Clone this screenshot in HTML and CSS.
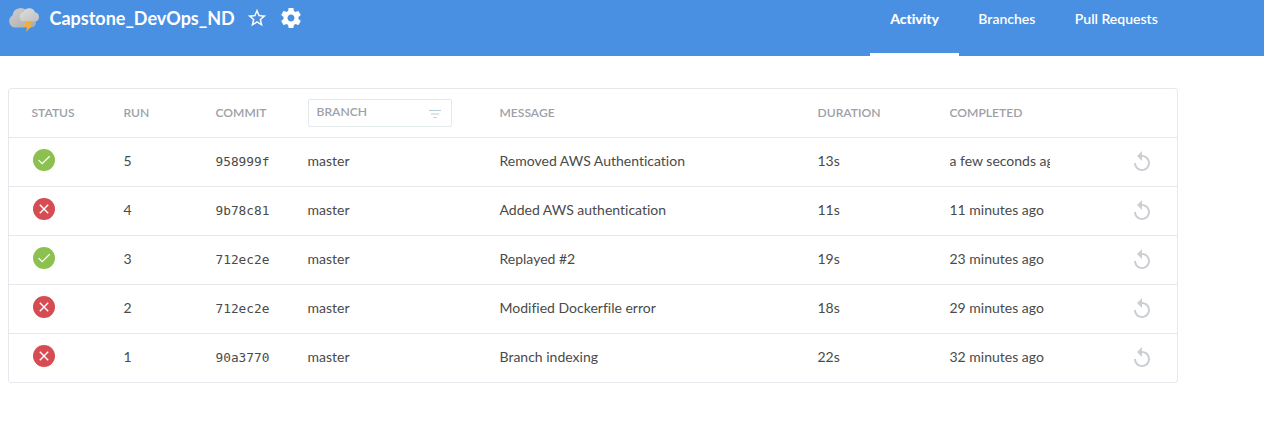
FILE: index.html
```
<!DOCTYPE html>
<html lang="en">
<head>
<meta charset="utf-8">
<title>Capstone_DevOps_ND</title>
<link rel="stylesheet" href="styles.css">
</head>
<body>
<svg class="defs" width="0" height="0">
  <symbol id="ok" viewBox="0 0 22 22"><circle cx="11" cy="11" r="11" fill="#8cc04f"/><path d="M5.6 11.1L9.2 14.7L16.7 7.2" fill="none" stroke="#fff" stroke-width="1.3"/></symbol>
  <symbol id="fail" viewBox="0 0 22 22"><circle cx="11" cy="11" r="11" fill="#d54c53"/><path d="M6.8 6.8L15.2 15.2M15.2 6.8L6.8 15.2" fill="none" stroke="#fff" stroke-width="1.4"/></symbol>
  <symbol id="replay" viewBox="0 0 24 24"><path fill="#cbced3" d="M12 5V1L7 6l5 5V7c3.310 0 6 2.690 6 6s-2.690 6-6 6-6-2.690-6-6H4c0 4.420 3.580 8 8 8s8-3.580 8-8-3.580-8-8-8z"/></symbol>
</svg>
<header class="header">
  <div class="title">
    <svg class="weather" width="32" height="26" viewBox="0 0 32 26">
      <defs>
        <linearGradient id="cloud-back" x1="0" y1="0" x2="1" y2="1"><stop offset="0" stop-color="#d0d0d0"/><stop offset="1" stop-color="#a9a9a9"/></linearGradient>
        <linearGradient id="cloud-front" x1="0" y1="0" x2="1" y2="1"><stop offset="0" stop-color="#dedede"/><stop offset="1" stop-color="#c0c0c0"/></linearGradient>
      </defs>
      <path fill="url(#cloud-back)" d="M6.500 20.500A6.500 6.500 0 0 1 4.500 8.500A8.200 8.200 0 0 1 19 4L27 12Q30 19.500 23 20.500Z"/>
      <path fill="url(#cloud-front)" d="M20.500 14.500H15.500A4.900 4.900 0 0 1 15.500 4.900A6.200 6.200 0 0 1 27 5.300A4.700 4.700 0 0 1 27.500 14.500Z"/>
      <path fill="#f6ae35" d="M17.500 14H25L21.800 18H24.500L18 25L19.300 19.500H15.500Z"/>
    </svg>
    <h1 class="name">Capstone_DevOps_ND</h1>
    <svg class="star" width="22" height="22" viewBox="0 0 24 24"><path fill="#fff" d="M22 9.240l-7.190-.62L12 2 9.190 8.630 2 9.240l5.460 4.730L5.820 21 12 17.270 18.180 21l-1.630-7.030L22 9.240zM12 15.400l-3.760 2.270 1-4.280-3.320-2.880 4.380-.38L12 6.100l1.710 4.040 4.380.38-3.320 2.880 1 4.280L12 15.400z"/></svg>
    <svg class="gear" width="24" height="24" viewBox="0 0 24 24"><path fill="#fff" d="M19.430 12.980c.04-.32.07-.64.07-.98s-.03-.66-.07-.98l2.110-1.650c.19-.15.24-.42.12-.64l-2-3.460c-.12-.22-.39-.3-.61-.22l-2.490 1c-.52-.4-1.080-.73-1.690-.98l-.38-2.650C14.460 2.180 14.250 2 14 2h-4c-.25 0-.46.18-.49.42l-.38 2.650c-.61.25-1.170.59-1.690.98l-2.490-1c-.23-.09-.49 0-.61.22l-2 3.460c-.13.22-.07.49.12.64l2.110 1.650c-.04.32-.07.65-.07.98s.03.66.07.98l-2.110 1.650c-.19.15-.24.42-.12.64l2 3.460c.12.22.39.3.61.22l2.490-1c.52.4 1.080.73 1.690.98l.38 2.650c.03.24.24.42.49.42h4c.25 0 .46-.18.49-.42l.38-2.650c.61-.25 1.170-.59 1.690-.98l2.490 1c.23.09.49 0 .61-.22l2-3.460c.12-.22.07-.49-.12-.64l-2.110-1.650zM12 15.500c-1.930 0-3.500-1.570-3.500-3.500s1.570-3.500 3.500-3.500 3.500 1.570 3.500 3.500-1.570 3.500-3.500 3.500z"/></svg>
  </div>
  <nav class="tabs">
    <a class="tab active">Activity</a>
    <a class="tab">Branches</a>
    <a class="tab">Pull Requests</a>
  </nav>
</header>
<main class="table">
  <div class="row head">
    <span>STATUS</span><span>RUN</span><span>COMMIT</span>
    <div class="filter"><span>BRANCH</span><svg width="12" height="8" viewBox="0 0 12 8"><path d="M0 .5H12M2 4H10M4.500 7.500H7.500" stroke="#b6cdd8"/></svg></div>
    <span>MESSAGE</span><span>DURATION</span><span>COMPLETED</span>
  </div>
  <div class="row"><svg class="status"><use href="#ok"/></svg><span>5</span><span class="hash">958999f</span><span>master</span><span>Removed AWS Authentication</span><span>13s</span><span class="time">a few seconds ago</span><svg class="replay"><use href="#replay"/></svg></div>
  <div class="row"><svg class="status"><use href="#fail"/></svg><span>4</span><span class="hash">9b78c81</span><span>master</span><span>Added AWS authentication</span><span>11s</span><span class="time">11 minutes ago</span><svg class="replay"><use href="#replay"/></svg></div>
  <div class="row"><svg class="status"><use href="#ok"/></svg><span>3</span><span class="hash">712ec2e</span><span>master</span><span>Replayed #2</span><span>19s</span><span class="time">23 minutes ago</span><svg class="replay"><use href="#replay"/></svg></div>
  <div class="row"><svg class="status"><use href="#fail"/></svg><span>2</span><span class="hash">712ec2e</span><span>master</span><span>Modified Dockerfile error</span><span>18s</span><span class="time">29 minutes ago</span><svg class="replay"><use href="#replay"/></svg></div>
  <div class="row"><svg class="status"><use href="#fail"/></svg><span>1</span><span class="hash">90a3770</span><span>master</span><span>Branch indexing</span><span>22s</span><span class="time">32 minutes ago</span><svg class="replay"><use href="#replay"/></svg></div>
</main>
</body>
</html>
```
FILE: styles.css
```
* { box-sizing: border-box; }
body { margin: 0; background: #fff; color: #4a4a4a; font: 14px/20px Lato, sans-serif; font-variant-ligatures: none; overflow: hidden; }
.defs { display: none; }
.header { display: flex; justify-content: space-between; height: 56px; padding: 0 86.500px 0 8px; background: #4a90e2; color: #fff; }
.title { display: flex; align-items: center; height: 36px; }
.weather { margin-top: 4px; }
.name { margin: -1px 11.500px 0 9.500px; font-size: 18px; line-height: 24px; font-weight: 700; }
.gear { margin-left: 11px; }
.tabs { display: flex; }
.tab { height: 56px; padding: 9px 19.700px 0; font-weight: 600; }
.active { border-bottom: 3px solid #fff; font-weight: 900; letter-spacing: -.05px; }
.table { width: 1170px; margin: 32px 0 0 8px; border: 1px solid #e6e8ed; border-radius: 3px; }
.row { display: grid; grid-template-columns: 92px 92px 92px 192px 318px 132px 180px 24px; align-items: center; height: 49px; padding: 0 0 2px 22.500px; border-bottom: 1px solid #e6e8ed; white-space: nowrap; }
.row:last-child { height: 48px; padding-bottom: 2px; border-bottom: 0; }
.head { padding-bottom: 0; color: #9da0a9; font-size: 12.100px; font-weight: 600; }
.filter { display: flex; justify-content: space-between; width: 144px; height: 28px; padding: 2px 10px 0 8px; border: 1px solid #e2eaec; border-radius: 2px; }
.filter svg { margin-top: 8px; }
.status { width: 22px; height: 22px; margin: -3px 0 0 1.500px; }
.hash { padding-top: 1px; font: 12.800px "DejaVu Sans Mono", monospace; }
.time { width: 100px; overflow: hidden; }
.replay { width: 24px; height: 24px; margin-top: 2px; }
```
